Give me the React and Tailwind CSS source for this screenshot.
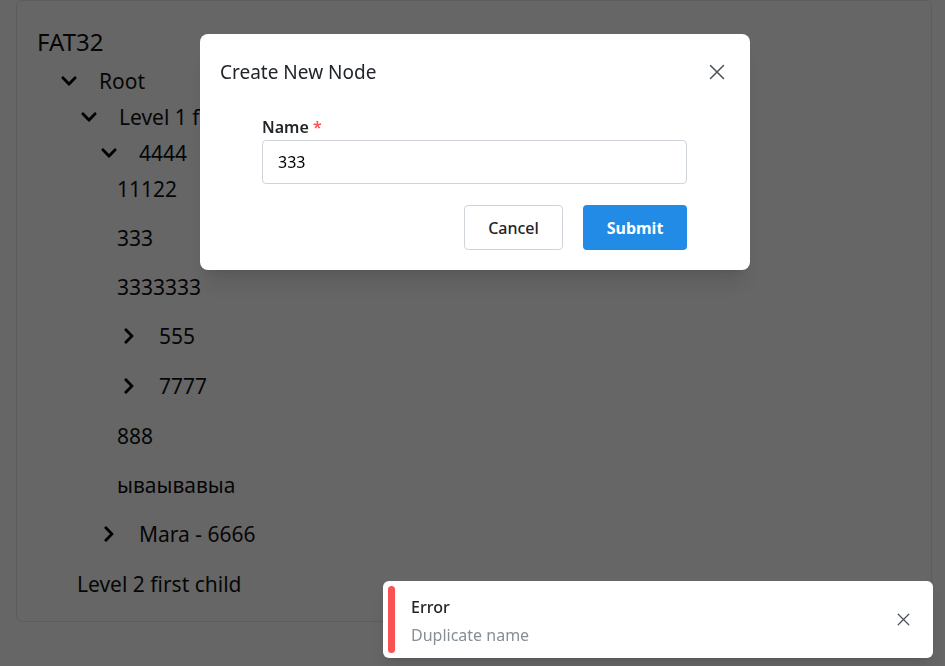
import { FaChevronDown, FaChevronRight } from 'react-icons/fa';

const tree = {
  name: 'Root',
  open: true,
  children: [
    {
      name: 'Level 1 first child',
      open: true,
      children: [
        {
          name: '4444',
          open: true,
          children: [
            { name: '11122' },
            { name: '333' },
            { name: '3333333' },
            { name: '555', children: [{ name: 'x' }] },
            { name: '7777', children: [{ name: 'x' }] },
            { name: '888' },
            { name: 'ываывавыа' },
          ],
        },
        { name: 'Mara - 6666', children: [{ name: 'x' }] },
      ],
    },
    { name: 'Level 2 first child' },
  ],
};

function CloseIcon({ size = 16 }) {
  return (
    <svg width={size} height={size} viewBox="0 0 16 16" fill="none" stroke="currentColor" strokeWidth="1.5" strokeLinecap="round">
      <path d="M1.5 1.5L14.5 14.5M14.5 1.5L1.5 14.5" />
    </svg>
  );
}

function Node({ node }) {
  const hasChildren = node.children && node.children.length > 0;

  if (!hasChildren) {
    return (
      <li className="h-9 mb-[13px] flex items-center -ml-[3px] pt-[2px] text-[21px]">{node.name}</li>
    );
  }

  return (
    <li>
      <div className={`h-9 flex items-center text-[21px] ${node.open ? '' : 'mb-[14px]'}`}>
        <span className="w-[18px] flex items-center text-black">
          {node.open ? <FaChevronDown size={18} /> : <FaChevronRight size={18} />}
        </span>
        <span className="ml-[21px] pt-[2px]">{node.name}</span>
      </div>
      {node.open && (
        <ul className="ml-5">
          {node.children.map((c) => (
            <Node key={c.name} node={c} />
          ))}
        </ul>
      )}
    </li>
  );
}

function App() {
  return (
    <div className="min-h-[666px] bg-white text-[#111] font-['Noto_Sans',sans-serif]">
      <div className="ml-4 w-[916px] border border-gray-200 rounded-md px-5 pt-5 pb-[6px]">
        <h1 className="h-[42px] flex items-center text-[24px]">FAT32</h1>
        <ul className="ml-[23px]">
          <Node node={tree} />
        </ul>
      </div>

      <div className="fixed inset-0 bg-black/60" />

      <div className="fixed left-[200px] top-[34px] w-[550px] bg-white rounded-lg shadow-xl px-5 pb-5">
        <div className="h-[76px] flex items-center justify-between">
          <h2 className="text-[19px] text-[#212529]">Create New Node</h2>
          <button className="w-7 h-7 flex items-center justify-center text-[#495057] -mr-[1px]">
            <CloseIcon size={16} />
          </button>
        </div>
        <form className="ml-[42px] mr-[43px] pt-[6px]">
          <label className="block text-[16px] font-semibold text-[#212529] leading-[22px] mb-[2px]">
            Name <span className="text-[#fa5252]">*</span>
          </label>
          <input
            defaultValue="333"
            className="w-full h-[44px] border border-[#ced4da] rounded px-[15px] text-[16px] text-[#000] outline-none"
          />
          <div className="flex justify-end gap-5 mt-[21px]">
            <button type="button" className="w-[99px] h-[45px] border border-[#ced4da] rounded text-[16px] font-medium text-[#212529] bg-white">
              Cancel
            </button>
            <button type="submit" className="w-[104px] h-[45px] rounded bg-[#228be6] text-white text-[16px] font-bold">
              Submit
            </button>
          </div>
        </form>
      </div>

      <div className="fixed right-[12px] bottom-[8px] w-[550px] h-[77px] bg-white rounded-md shadow-lg flex items-center pl-[5px] pr-[23px]">
        <div className="w-[7px] self-stretch my-[5px] rounded-full bg-[#fa5252]" />
        <div className="flex-1 ml-[16px] pt-[4px]">
          <div className="text-[16px] font-medium text-[#212529] leading-[26px]">Error</div>
          <div className="text-[16px] text-[#868e96] leading-[30px]">Duplicate name</div>
        </div>
        <button className="text-[#495057]">
          <CloseIcon size={13} />
        </button>
      </div>
    </div>
  );
}

export default App;
